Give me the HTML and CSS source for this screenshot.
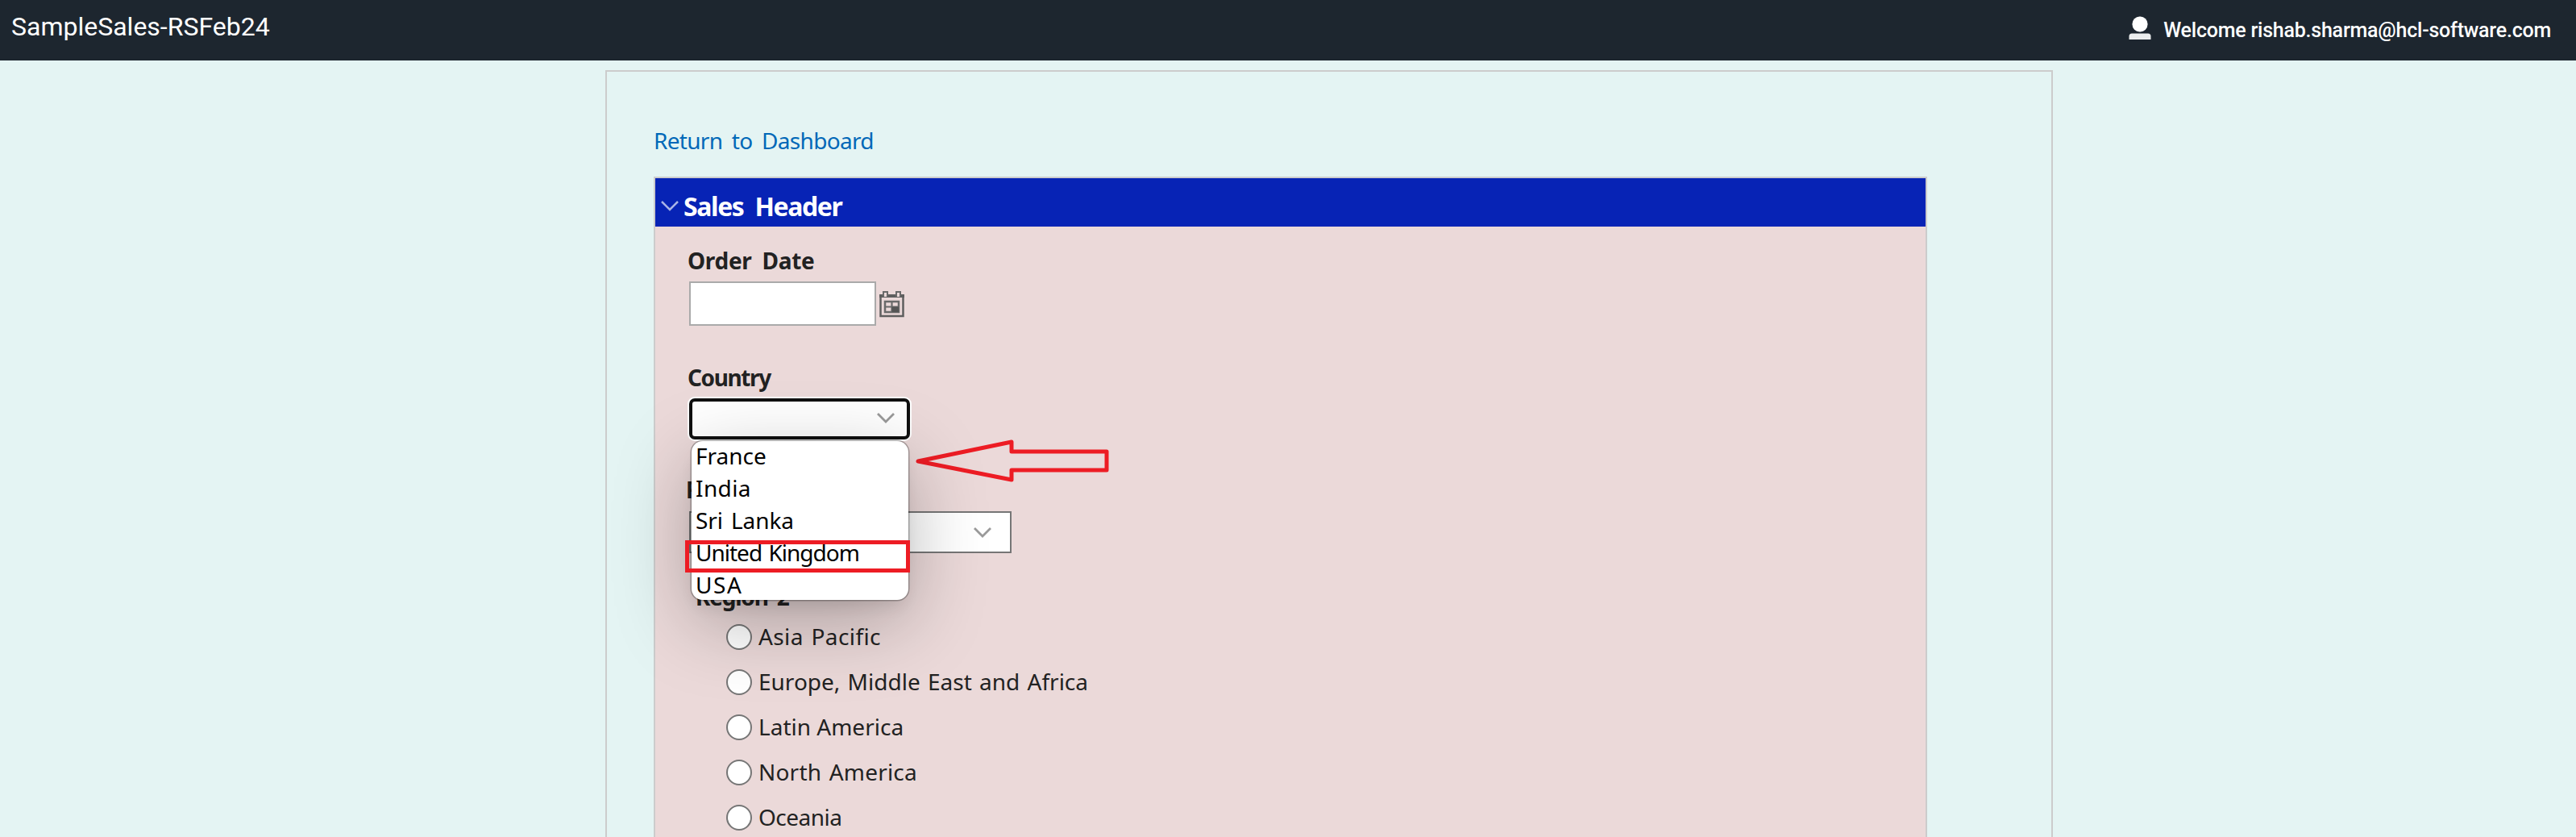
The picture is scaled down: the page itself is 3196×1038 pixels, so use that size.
FILE: index.html
```
<!DOCTYPE html>
<html lang="en">
<head>
<meta charset="utf-8">
<title>SampleSales-RSFeb24</title>
<link rel="stylesheet" href="styles.css">
</head>
<body>
<header class="topbar">
  <h1 class="app-title">SampleSales-RSFeb24</h1>
  <div class="user">
    <svg class="user-icon" width="28" height="30" viewBox="0 0 28 30"><rect x="4.500" y="0.500" width="19" height="19" rx="9" fill="#fff"/><path d="M0.500 29V25Q0.500 21.500 4 21.500H24Q27.500 21.500 27.500 25V29Z" fill="#eceeee"/></svg>
    <span class="welcome">Welcome rishab.sharma@hcl-software.com</span>
  </div>
</header>
<main class="page">
  <a class="return">Return to Dashboard</a>
  <section class="section">
    <h2 class="section-head">
      <svg width="24" height="14" viewBox="0 0 24 14"><path d="M2 2L12 12L22 2" fill="none" stroke="#a9b4e6" stroke-width="2.500"/></svg>
      <span>Sales Header</span>
    </h2>
    <div class="fields">
      <div class="label order">Order Date</div>
      <div class="date-row">
        <div class="input"></div>
        <svg width="31" height="33" viewBox="0 0 31 33">
          <path d="M1.500 5.500V31H29.500V5.500" fill="none" stroke="#5f5f5f" stroke-width="2.500"/>
          <path d="M0 4H31V8H0Z" fill="#5f5f5f"/>
          <path d="M5 7V1H10V7M21 7V1H26V7" fill="#ead9d9" stroke="#6a6a6a" stroke-width="2"/>
          <rect x="7" y="13" width="17" height="13" fill="none" stroke="#6a6a6a" stroke-width="2.500"/>
          <path d="M15.500 13V26M7 19.500H24" stroke="#6a6a6a" stroke-width="2.200"/>
          <rect x="15.500" y="19.500" width="8.500" height="6.500" fill="#555"/>
        </svg>
      </div>
      <div class="label country">Country</div>
      <div class="select focused">
        <svg width="24" height="14" viewBox="0 0 24 14"><path d="M2 2L12 12L22 2" fill="none" stroke="#9a9a9a" stroke-width="2.800"/></svg>
        <ul class="options">
          <li class="o-france">France</li>
          <li class="o-india">India</li>
          <li class="o-lanka">Sri Lanka</li>
          <li class="o-uk">United Kingdom</li>
          <li class="o-usa">USA</li>
        </ul>
        <div class="highlight"></div>
        <svg class="arrow" width="242" height="54" viewBox="0 0 242 54"><path d="M4 27L120 3V15H238V38H120V50Z" fill="none" stroke="#ed1c24" stroke-width="5" stroke-linejoin="round"/></svg>
      </div>
      <div class="label region">Region</div>
      <div class="select wide">
        <svg width="24" height="14" viewBox="0 0 24 14"><path d="M2 2L12 12L22 2" fill="none" stroke="#9a9a9a" stroke-width="2.800"/></svg>
      </div>
      <div class="label region-two">Region 2</div>
      <div class="radios">
        <div class="radio"><i></i><span class="r-asia">Asia Pacific</span></div>
        <div class="radio"><i></i><span class="r-europe">Europe, Middle East and Africa</span></div>
        <div class="radio"><i></i><span>Latin America</span></div>
        <div class="radio"><i></i><span class="r-north">North America</span></div>
        <div class="radio"><i></i><span class="r-oceania">Oceania</span></div>
      </div>
    </div>
  </section>
</main>
</body>
</html>
```
FILE: styles.css
```
* { box-sizing: border-box; }
body {
  margin: 0;
  height: 1038px;
  overflow: hidden;
  background: #e4f4f3;
  font-family: "Noto Sans", sans-serif;
  font-size: 28px;
  line-height: 40px;
  color: #222;
}
svg { display: block; flex: none; }
.topbar {
  display: flex;
  justify-content: space-between;
  height: 75px;
  padding: 0 31px 0 14px;
  background: #1d262f;
  color: #fff;
}
.app-title {
  margin: 0;
  font: 400 32px/66px Roboto, sans-serif;
}
.user { display: flex; gap: 15px; }
.user-icon { margin-top: 20px; }
.welcome { font: 500 25px/75px Roboto, sans-serif; letter-spacing: -0.22px; }
.page {
  width: 1796px;
  height: 980px;
  margin: 12px 0 0 751px;
  padding: 65px 154px 0 58px;
  border: 2px solid #ccc;
}
.return {
  display: block;
  margin: 0 0 25px 0;
  color: #0068b8;
  letter-spacing: -0.7px;
  word-spacing: 5px;
}
.section {
  height: 840px;
  border: 2px solid #ccc;
  background: #ebd9d9;
}
.section-head {
  display: flex;
  gap: 5px;
  height: 60px;
  margin: 0;
  padding: 9px 0 0 6px;
  background: #0723b5;
  color: #fff;
  font-size: 32px;
  line-height: 51px;
  letter-spacing: -1.4px;
  word-spacing: 7px;
}
.section-head svg { margin-top: 18px; }
.fields { padding: 22px 0 0 42px; }
.label { margin-left: -2px; font-weight: 700; }
.date-row { display: flex; gap: 4px; margin: 6px 0 44px; }
.date-row svg { margin-top: 12px; }
.input { width: 232px; height: 55px; background: #fff; border: 2px solid #aaa; }
.country { letter-spacing: -1.4px; }
.order { letter-spacing: -0.3px; word-spacing: 6px; }
.select {
  position: relative;
  display: flex;
  justify-content: flex-end;
  width: 274px;
  height: 51px;
  background: #fff;
}
.focused {
  margin: 6px 0 42px;
  padding: 13px 14px 0 0;
  border: 4px solid #101010;
  border-radius: 7px;
  box-shadow: 0 0 0 2px #fff;
}
.wide {
  width: 400px;
  height: 52px;
  margin: 7px 0 34px;
  padding: 17px 22px 0 0;
  border: 2px solid #767676;
}
.options {
  position: absolute;
  z-index: 2;
  left: -1px;
  top: 49px;
  width: 269px;
  height: 197px;
  margin: 0;
  padding: 0 0 0 5px;
  list-style: none;
  background: #fff;
  border-radius: 14px;
  box-shadow: 0 0 0 1.5px rgba(0, 0, 0, .28), 0 12px 20px -6px rgba(0, 0, 0, .1), 0 26px 96px rgba(0, 0, 0, .28);
  color: #000;
  line-height: 36px;
}
.options li { margin-bottom: 4px; white-space: nowrap; }
.o-uk { letter-spacing: -1px; word-spacing: 2px; }
.o-india { letter-spacing: 0.4px; }
.o-lanka { letter-spacing: -0.1px; word-spacing: 3px; }
.o-usa { letter-spacing: 1.6px; }
.highlight {
  position: absolute;
  z-index: 3;
  left: -9px;
  top: 172px;
  width: 279px;
  height: 40px;
  border: 5px solid #ed1c24;
}
.arrow { position: absolute; left: 276px; top: 47px; }
.region { margin-left: -4px; }
.region-two { margin-left: 8px; letter-spacing: -1.2px; word-spacing: 5px; }
.radios { padding: 2px 0 0 46px; }
.radio { display: flex; align-items: center; gap: 8px; height: 56px; }
.radio i { width: 32px; height: 32px; background: #fff; border: 2px solid #767676; border-radius: 50%; }
.radio span { margin-top: -2px; }
.r-asia { letter-spacing: 0.4px; word-spacing: 2px; }
.r-europe { word-spacing: 2px; }
.r-north { letter-spacing: 0.2px; word-spacing: 2px; }
.r-oceania { letter-spacing: -0.5px; }
```
